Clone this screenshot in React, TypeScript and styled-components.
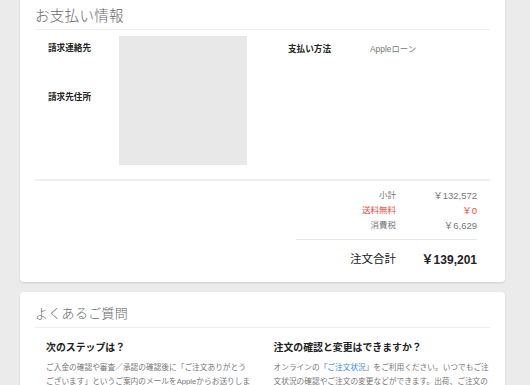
import styled, { createGlobalStyle } from 'styled-components'

const GlobalStyle = createGlobalStyle`
  body {
    margin: 0;
    background: #ebebeb;
    font-family: "Liberation Sans", "Noto Sans CJK JP", sans-serif;
    color: #333;
  }
`

const Page = styled.div`
  display: flex;
  flex-direction: column;
  gap: 10px;
  padding: 0 25px 0 20px;
  margin-top: -6px;
`

const Card = styled.section`
  background: #fff;
  border-radius: 4px;
  box-shadow: 0 1px 2px rgba(0, 0, 0, 0.12);
  padding: 0 15px;
  overflow: hidden;
`

const CardTitle = styled.h2<{ $size: number }>`
  margin: 0;
  height: 36px;
  display: flex;
  align-items: center;
  padding-top: 6px;
  box-sizing: border-box;
  font-size: ${p => p.$size}px;
  font-weight: 300;
  color: #666;
  letter-spacing: 0.3px;
  border-bottom: 1px solid #eeeeee;
`

const InfoSection = styled.div`
  display: flex;
  padding: 6px 13px 14px;
  border-bottom: 2px solid #f0f0f0;
`

const BillingBlock = styled.div`
  display: flex;
`

const LabelList = styled.div`
  width: 71px;
  display: flex;
  flex-direction: column;
  gap: 35px;
  padding-top: 5px;
`

const Label = styled.div`
  font-size: 8.6px;
  font-weight: 700;
  color: #222;
  line-height: 14px;
`

const Placeholder = styled.div`
  width: 128px;
  height: 129px;
  background: #e8e8e8;
`

const PaymentBlock = styled.div`
  display: flex;
  margin-left: 41px;
  padding-top: 6px;
  align-items: flex-start;
`

const PaymentLabel = styled(Label)`
  width: 82px;
`

const PaymentValue = styled.div`
  font-size: 8.4px;
  color: #777;
  line-height: 14px;
`

const Summary = styled.div`
  display: flex;
  flex-direction: column;
  align-items: flex-end;
  padding: 7px 13px 0;
`

const Rows = styled.div`
  display: grid;
  grid-template-columns: auto 81px;
  width: 181px;
  padding-bottom: 6px;
  border-bottom: 1px solid #e6e6e6;
`

const RowLabel = styled.div<{ $red?: boolean }>`
  text-align: right;
  font-size: 8.5px;
  line-height: 15px;
  color: ${p => (p.$red ? '#f0483e' : '#777')};
`

const RowValue = styled(RowLabel)`
  font-size: 9.5px;
`

const TotalRow = styled.div`
  display: grid;
  grid-template-columns: auto 81px;
  width: 181px;
  height: 36px;
  align-items: center;
  padding-bottom: 6px;
`

const TotalLabel = styled.div`
  text-align: right;
  font-size: 11.5px;
  color: #222;
`

const TotalValue = styled.div`
  text-align: right;
  font-size: 12px;
  font-weight: 700;
  color: #222;
`

const FaqGrid = styled.div`
  display: grid;
  grid-template-columns: 1fr 1fr;
  padding-top: 12px;
`

const FaqItem = styled.div<{ $gutter: number }>`
  padding: 0 ${p => p.$gutter}px 0 11px;
`

const FaqHeading = styled.h3`
  margin: 0 0 5px;
  font-size: 9.9px;
  font-weight: 700;
  color: #222;
  line-height: 16px;
`

const FaqText = styled.p`
  margin: 0;
  font-size: 7.7px;
  line-height: 14px;
  color: #777;
`

const Link = styled.span`
  color: #3a8cd0;
`

const App = () => {
  return (
    <>
      <GlobalStyle />
      <Page>
        <Card>
          <CardTitle $size={14.5}>お支払い情報</CardTitle>
          <InfoSection>
            <BillingBlock>
              <LabelList>
                <Label>請求連絡先</Label>
                <Label>請求先住所</Label>
              </LabelList>
              <Placeholder />
            </BillingBlock>
            <PaymentBlock>
              <PaymentLabel>支払い方法</PaymentLabel>
              <PaymentValue>Appleローン</PaymentValue>
            </PaymentBlock>
          </InfoSection>
          <Summary>
            <Rows>
              <RowLabel>小計</RowLabel>
              <RowValue>￥132,572</RowValue>
              <RowLabel $red>送料無料</RowLabel>
              <RowValue $red>￥0</RowValue>
              <RowLabel>消費税</RowLabel>
              <RowValue>￥6,629</RowValue>
            </Rows>
            <TotalRow>
              <TotalLabel>注文合計</TotalLabel>
              <TotalValue>￥139,201</TotalValue>
            </TotalRow>
          </Summary>
        </Card>

        <Card>
          <CardTitle $size={13}>よくあるご質問</CardTitle>
          <FaqGrid>
            <FaqItem $gutter={12}>
              <FaqHeading>次のステップは？</FaqHeading>
              <FaqText>
                ご入金の確認や審査／承認の確認後に「ご注文ありがとうございます」というご案内のメールをAppleからお送りします。
              </FaqText>
            </FaqItem>
            <FaqItem $gutter={0}>
              <FaqHeading>注文の確認と変更はできますか？</FaqHeading>
              <FaqText>
                オンラインの「<Link>ご注文状況</Link>」をご利用ください。いつでもご注文状況の確認やご注文の変更などができます。出荷、ご注文の詳細についてもご確認いただけます。
              </FaqText>
            </FaqItem>
          </FaqGrid>
        </Card>
      </Page>
    </>
  )
}

export default App
